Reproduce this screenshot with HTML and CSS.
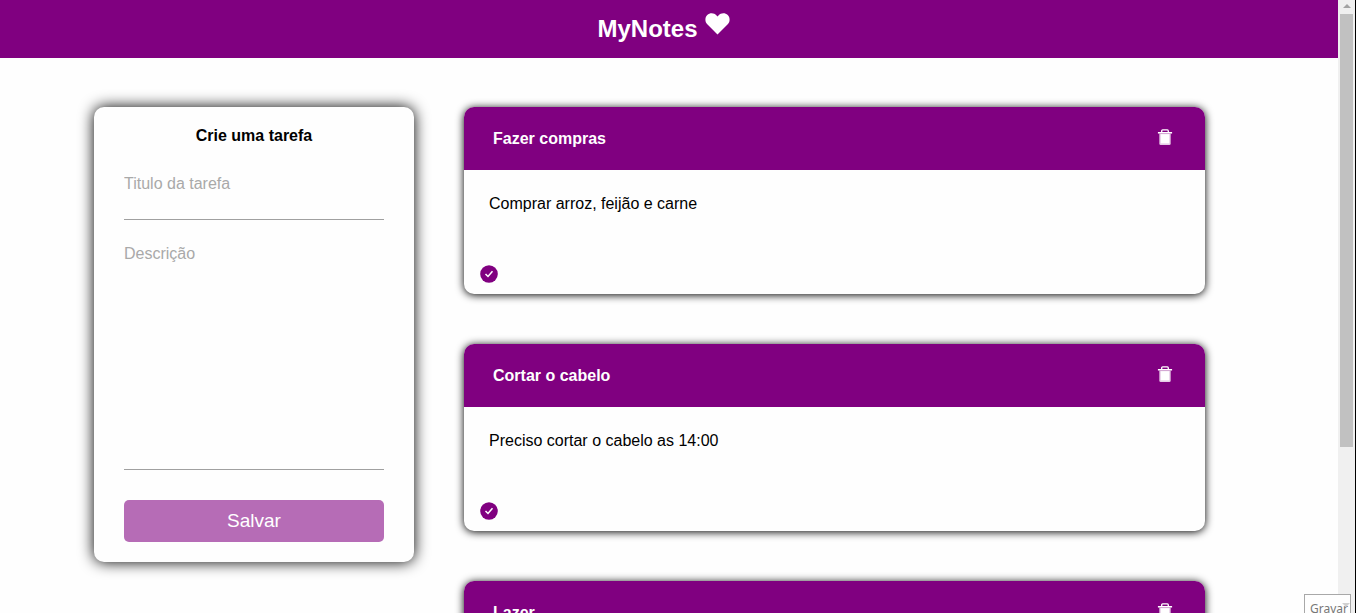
FILE: index.html
```html
<!DOCTYPE html>
<html lang="pt-BR">
<head>
<meta charset="utf-8">
<title>MyNotes</title>
<link rel="stylesheet" href="styles.css">
</head>
<body>
<svg class="sprite" aria-hidden="true">
  <symbol id="trash" viewBox="0 0 16 18">
    <path d="M4.500 3.500V2Q4.500 1 5.500 1H10.500Q11.500 1 11.500 2V3.500" fill="none" stroke="#fff" stroke-width="1.400"/>
    <path d="M.5 3.200H15.500V4.800H.5z" fill="#fff"/>
    <path d="M2 4.800H14V15.500Q14 17 12.500 17H3.500Q2 17 2 15.500z" fill="#e6cce6"/>
    <path d="M3.500 5.500H12.500V15.200H3.500z" fill="#fff"/>
  </symbol>
  <symbol id="check" viewBox="0 0 18 18">
    <circle cx="9" cy="9" r="8.800" fill="purple"/>
    <path d="M5.500 9L8 11.500L12.500 6.200" fill="none" stroke="#fff" stroke-width="1.500"/>
  </symbol>
</svg>
<div class="window">
  <div class="page">
    <header class="topbar">
      <h1 class="brand">MyNotes</h1>
      <svg class="heart" viewBox="0 0 26 23" aria-hidden="true"><path d="M13 22.500L2.300 11.800C-.4 9-.2 4.600 2.300 2.200C5-.4 9.500-.2 12 2.600L13 3.700L14 2.600C16.500-.2 21-.4 23.700 2.200C26.200 4.600 26.400 9 23.700 11.800z" fill="#fff"/></svg>
    </header>
    <main class="content">
      <form class="task-form">
        <h2 class="form-title">Crie uma tarefa</h2>
        <input class="field" type="text" placeholder="Titulo da tarefa" aria-label="Titulo da tarefa">
        <textarea class="field field-area" placeholder="Descrição" aria-label="Descrição"></textarea>
        <button class="save" type="button">Salvar</button>
      </form>
      <section class="notes">
        <article class="note">
          <header class="note-head"><h3 class="note-title">Fazer compras</h3><button class="icon-button" type="button" aria-label="Excluir"><svg class="trash"><use href="#trash"/></svg></button></header>
          <div class="note-body"><p class="note-text">Comprar arroz, feijão e carne</p><button class="icon-button" type="button" aria-label="Concluir"><svg class="check"><use href="#check"/></svg></button></div>
        </article>
        <article class="note">
          <header class="note-head"><h3 class="note-title">Cortar o cabelo</h3><button class="icon-button" type="button" aria-label="Excluir"><svg class="trash"><use href="#trash"/></svg></button></header>
          <div class="note-body"><p class="note-text">Preciso cortar o cabelo as 14:00</p><button class="icon-button" type="button" aria-label="Concluir"><svg class="check"><use href="#check"/></svg></button></div>
        </article>
        <article class="note">
          <header class="note-head"><h3 class="note-title">Lazer</h3><button class="icon-button" type="button" aria-label="Excluir"><svg class="trash"><use href="#trash"/></svg></button></header>
          <div class="note-body"></div>
        </article>
      </section>
    </main>
  </div>
  <div class="scrollbar" aria-hidden="true">
    <svg class="arrow" viewBox="0 0 8 4"><path d="M4 0L8 4H0z" fill="#a3a3a3"/></svg>
    <div class="thumb"></div>
  </div>
  <button class="record" type="button">Gravar<svg class="record-arrow" viewBox="0 0 8 4" aria-hidden="true"><path d="M0 0H8L4 4z" fill="#d0d0d0"/></svg></button>
</div>
</body>
</html>
```
FILE: styles.css
```css
* { box-sizing: border-box; margin: 0; }

body {
  background: #fefefe;
  color: #000;
  font-family: "Liberation Sans", Arial, sans-serif;
  font-size: 16px;
  overflow: hidden;
}

button, input, textarea { font: inherit; border: 0; }

.sprite { position: absolute; width: 0; height: 0; }

.window { display: flex; height: 100vh; position: relative; }

.page { flex: 1; min-width: 0; overflow: hidden; }

.topbar {
  display: flex;
  justify-content: center;
  gap: 7px;
  padding: 13px 11px 13px 0;
  height: 58px;
  background: purple;
  color: #fff;
}

.brand { font-size: 24px; line-height: 32px; }

.heart { width: 25px; height: 22px; }

.content {
  display: flex;
  align-items: flex-start;
  gap: 50px;
  padding: 49px 133px 49px 94px;
}

.task-form {
  display: flex;
  flex-direction: column;
  flex: 0 0 320px;
  padding: 20px 30px;
  border-radius: 10px;
  background: #fefefe;
  box-shadow: 0 0 15px #000;
}

.form-title {
  margin-bottom: 19px;
  font-size: 16px;
  line-height: 18px;
  text-align: center;
}

.field {
  display: block;
  width: 100%;
  height: 56px;
  padding: 0 0 16px;
  border-bottom: 1px solid #a0a0a0;
  border-radius: 0;
  background: transparent;
  outline: 0;
  resize: none;
}

.field::placeholder { color: #a9a9a9; opacity: 1; }

.field-area {
  height: 225px;
  margin: 25px 0 30px;
  padding: 0;
  line-height: 18px;
}

.save {
  height: 42px;
  padding: 0;
  border-radius: 5px;
  background: #b66cb6;
  color: #fff;
  font-size: 19px;
}

.notes { display: flex; flex: 1; flex-direction: column; gap: 50px; }

.note {
  border-radius: 10px;
  background: #fefefe;
  box-shadow: 0 1px 8px #000;
}

.note-head {
  display: flex;
  align-items: flex-start;
  justify-content: space-between;
  height: 63px;
  padding: 22px 32px 0 29px;
  border-radius: 10px 10px 0 0;
  background: purple;
  color: #fff;
}

.note-title { font-size: 16px; line-height: 20px; }

.note-body {
  display: flex;
  flex-direction: column;
  align-items: flex-start;
  justify-content: space-between;
  height: 124px;
  padding: 25px 16px 11px;
}

.note-text { padding-left: 9px; line-height: 18px; }

.icon-button { display: block; padding: 0; background: none; }

.icon-button svg { display: block; }

.trash { width: 16px; height: 17px; }

.check { width: 18px; height: 18px; }

.scrollbar {
  display: flex;
  flex: 0 0 18px;
  flex-direction: column;
  align-items: center;
  padding-top: 4px;
  border-right: 1px solid #000;
  background: #f0f0f0;
}

.arrow { flex: none; width: 8px; height: 4px; }

.thumb { width: 13px; height: 433px; margin-top: 6px; background: #c1c1c1; }

.record {
  position: absolute;
  right: 5px;
  bottom: -12px;
  width: 47px;
  height: 31px;
  padding: 0 0 2px 5px;
  border: 1px solid #a8a8a8;
  background: #fefefe;
  color: #777;
  font-family: "Noto Sans", sans-serif;
  font-size: 12px;
  line-height: 27px;
  text-align: left;
}

.record-arrow { position: absolute; right: 0; top: 8px; width: 8px; height: 4px; }
```
